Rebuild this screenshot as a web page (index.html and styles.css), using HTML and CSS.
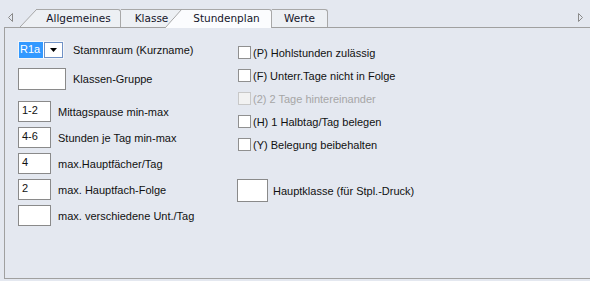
FILE: index.html
```html
<!DOCTYPE html>
<html lang="de">
<head>
  <meta charset="UTF-8" />
  <title>Klasse - Stundenplan</title>
  <link rel="stylesheet" href="styles.css">
</head>
<body>
  <div class="tabbar">
    <span class="scroll left">
      <svg width="6" height="10" viewBox="0 0 6 10"><polygon points="4.5,0.5 0.5,4.5 4.5,8.5" fill="none" stroke="#8a8a8a" /></svg>
    </span>
    <div class="tabs">
      <div class="tab slant"><span class="lbl w1">Allgemeines</span></div>
      <div class="tab"><span class="lbl w2">Klasse</span></div>
      <div class="tab slant active"><span class="lbl w3">Stundenplan</span></div>
      <div class="tab"><span class="lbl w4">Werte</span></div>
    </div>
    <span class="scroll right">
      <svg width="6" height="10" viewBox="0 0 6 10"><polygon points="0.5,0.5 4.5,4.5 0.5,8.5" fill="none" stroke="#8a8a8a" /></svg>
    </span>
  </div>

  <div class="panel">
    <div class="col-left">
      <div class="row r1">
        <div class="combo">
          <span class="sel">R1a</span>
          <span class="drop"><svg width="8" height="5" viewBox="0 0 8 5"><polygon points="0,0 7,0 3.5,4" fill="#000" /></svg></span>
        </div>
        <span class="text gap9">Stammraum (Kurzname)</span>
      </div>
      <div class="row r2">
        <div class="field wide"></div>
        <span class="text">Klassen-Gruppe</span>
      </div>
      <div class="row r3">
        <div class="field">1-2</div>
        <span class="text">Mittagspause min-max</span>
      </div>
      <div class="row">
        <div class="field">4-6</div>
        <span class="text">Stunden je Tag min-max</span>
      </div>
      <div class="row">
        <div class="field">4</div>
        <span class="text">max.Hauptfächer/Tag</span>
      </div>
      <div class="row">
        <div class="field">2</div>
        <span class="text">max. Hauptfach-Folge</span>
      </div>
      <div class="row">
        <div class="field"></div>
        <span class="text">max. verschiedene Unt./Tag</span>
      </div>
    </div>

    <div class="col-right">
      <label class="check"><span class="cb"></span>(P) Hohlstunden zulässig</label>
      <label class="check"><span class="cb"></span>(F) Unterr.Tage nicht in Folge</label>
      <label class="check disabled"><span class="cb"></span>(2) 2 Tage hintereinander</label>
      <label class="check"><span class="cb"></span>(H) 1 Halbtag/Tag belegen</label>
      <label class="check"><span class="cb"></span>(Y) Belegung beibehalten</label>
      <div class="row main-class">
        <div class="field big"></div>
        <span class="text">Hauptklasse (für Stpl.-Druck)</span>
      </div>
    </div>
  </div>
</body>
</html>
```

FILE: styles.css
```css
body {
  margin: 0;
  background: #e4e8f0;
  font-family: "Liberation Sans", Arial, sans-serif;
  font-size: 11px;
  color: #111;
  height: 281px;
  overflow: hidden;
}

/* tab strip */
.tabbar {
  display: flex;
  height: 27px;
  align-items: flex-end;
}
.scroll {
  align-self: flex-start;
  padding-top: 13px;
  line-height: 0;
}
.scroll.left { width: 20px; padding-left: 8px; box-sizing: border-box; }
.scroll.right { margin-left: auto; margin-right: 6px; }
.tabs {
  display: flex;
  height: 18px;
}
.tab {
  display: flex;
  height: 18px;
  position: relative;
  font-family: "DejaVu Sans", sans-serif;
  font-size: 10.5px;
  color: #15152a;
}
.tab.slant::before {
  content: "";
  width: 17px;
  background: linear-gradient(to bottom right, transparent calc(50% - 0.7px), #a4a4a4 50%, #edf0f4 calc(50% + 0.7px));
}
.lbl {
  display: flex;
  align-items: center;
  justify-content: center;
  box-sizing: border-box;
  border-top: 1px solid #a8a8a8;
  background: #edf0f4;
  padding-bottom: 1px;
}
.w1 { width: 84px; border-right: 1px solid #a8a8a8; border-top-right-radius: 3px; }
.w2 { width: 61px; }
.w3 { width: 90px; border-right: 1px solid #a8a8a8; border-top-right-radius: 3px; }
.w4 { width: 56px; border-right: 1px solid #a8a8a8; border-top-right-radius: 3px; }
.tab.active {
  margin-left: -17px;
  height: 19px;
  margin-bottom: -1px;
  z-index: 1;
}
.tab.active::before {
  background: linear-gradient(to bottom right, transparent calc(50% - 0.7px), #a4a4a4 50%, #fbfcfe calc(50% + 0.7px));
}
.tab.active .lbl {
  background: #fbfcfe;
  padding-bottom: 2px;
}

/* panel */
.panel {
  margin-left: 4px;
  height: 252px;
  box-sizing: border-box;
  border: 1px solid #a0a0a0;
  border-right: none;
  padding: 12px 0 0 13px;
  display: flex;
}
.col-left { width: 219px; padding-top: 1px; }
.row {
  display: flex;
  align-items: center;
  margin-top: 5px;
}
.row.r1 { margin-top: 0; }
.row.r2 { margin-top: 9px; }
.row.r3 { margin-top: 11px; }
.text { margin-left: 7px; white-space: nowrap; }
.text.gap9 { margin-left: 9px; }

.field {
  width: 33px;
  height: 21px;
  box-sizing: border-box;
  border: 1px solid #8a8a8a;
  background: #fff;
  padding: 2px 3px;
  line-height: 13px;
  align-self: flex-start;
}
.row .field + .text { align-self: center; }
.field.wide { width: 48px; height: 22px; }
.field.big { width: 31px; height: 23px; }

.combo {
  display: flex;
  width: 46px;
  height: 18px;
  box-sizing: border-box;
  border: 1px solid #f4f6f9;
  background: #fff;
}
.sel {
  width: 23px;
  background: #3399ff;
  color: #fff;
  line-height: 15px;
  padding-left: 1px;
  overflow: hidden;
}
.drop {
  flex: 1;
  display: flex;
  align-items: center;
  justify-content: center;
  border: 1px solid #6f91c6;
  background: #fff;
  margin-left: 1px;
}

.col-right { padding-top: 1px; }
.check {
  display: flex;
  align-items: center;
  height: 23px;
  margin-left: 1px;
  white-space: nowrap;
}
.cb {
  width: 13px;
  height: 13px;
  box-sizing: border-box;
  border: 1px solid #909090;
  background: #fff;
  margin-right: 2px;
}
.check.disabled { color: #a6a6a6; }
.check.disabled .cb { border-color: #c8c8c8; background: #f2f2f2; }
.main-class { margin-top: 23px; }
.main-class .text { margin-left: 5px; }
```
